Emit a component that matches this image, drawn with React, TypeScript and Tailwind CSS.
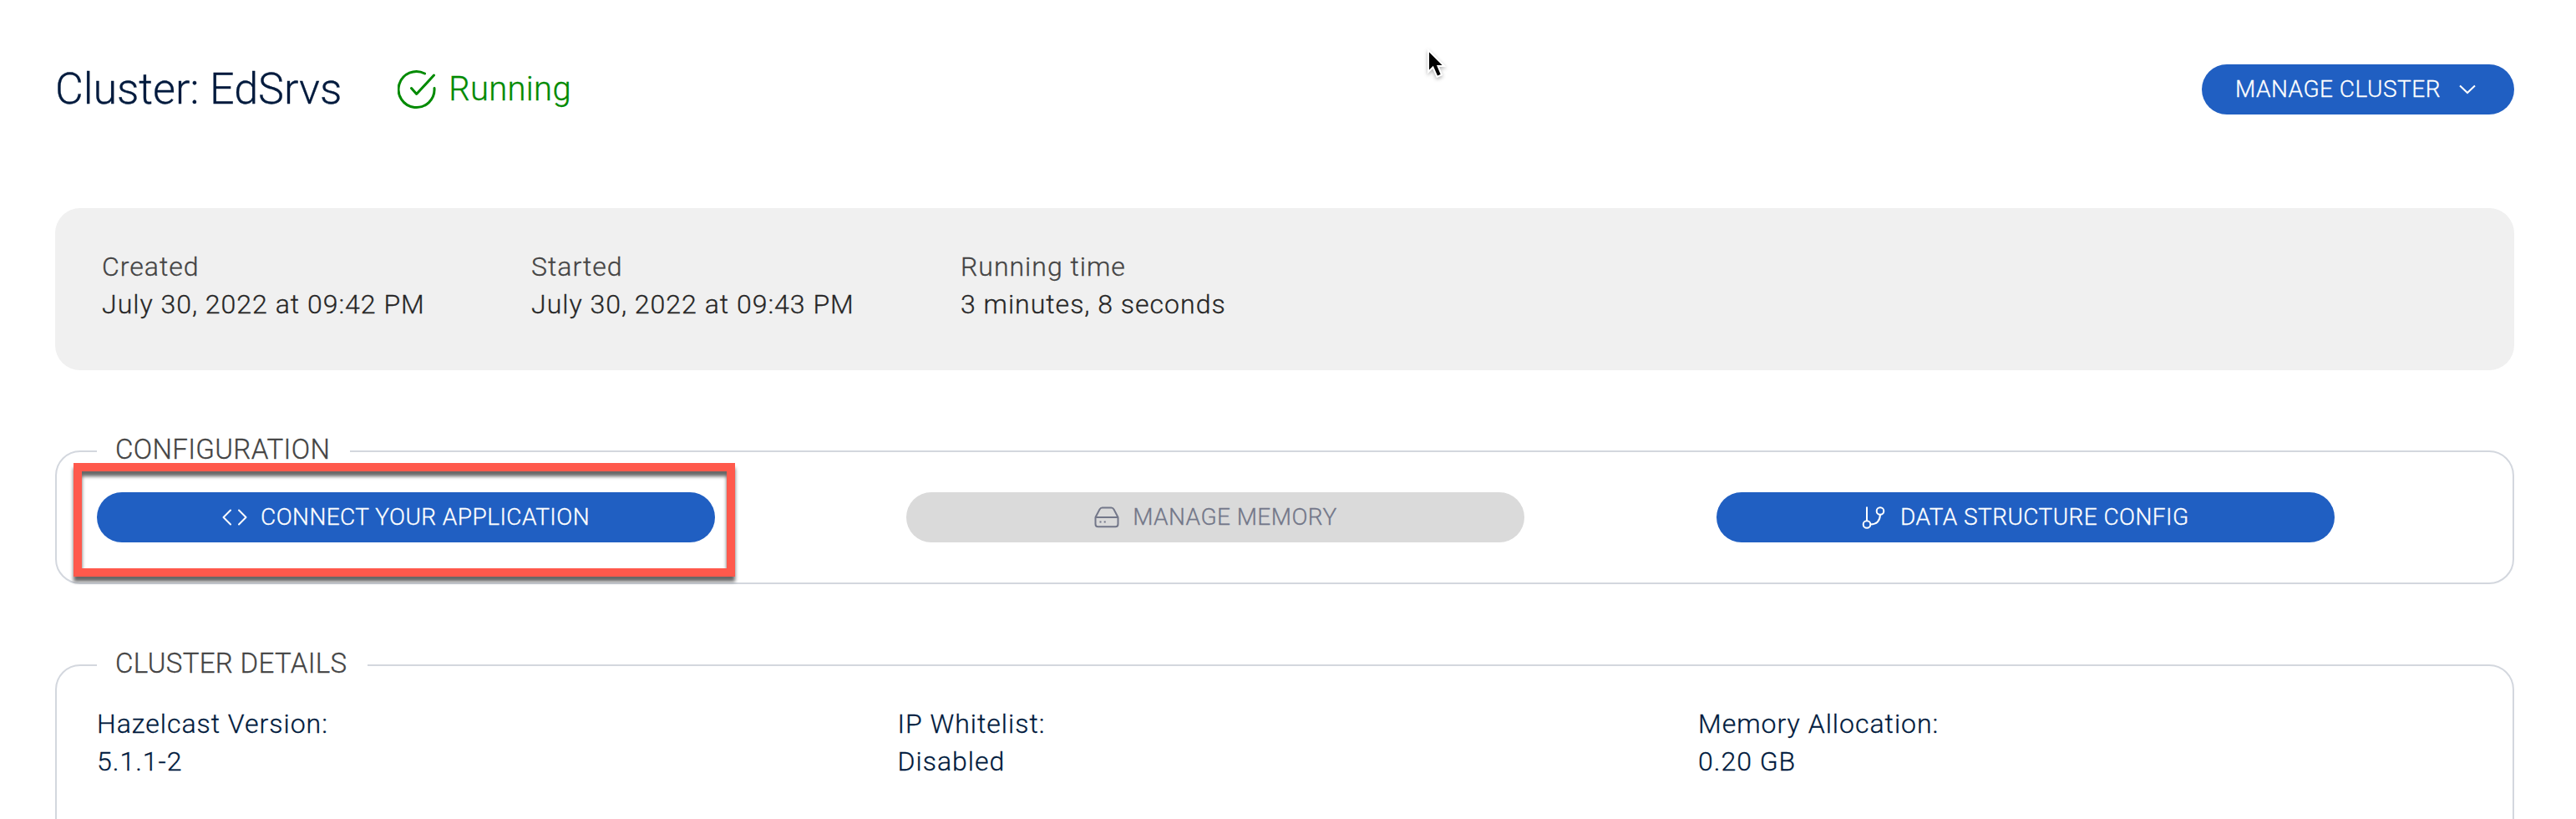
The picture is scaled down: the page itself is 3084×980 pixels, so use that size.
import React from "react";

const FONT = "font-['Roboto',sans-serif] font-light [-webkit-text-stroke:0.3px]";

type IconProps = { className?: string };

function CheckCircle({ className }: IconProps) {
  return (
    <svg className={className} viewBox="0 0 46 48" fill="none" stroke="currentColor" strokeWidth="3" strokeLinecap="round" strokeLinejoin="round">
      <path d="M32.5 5 A21.5 21.5 0 1 0 44 22.5" />
      <path d="M16.5 22.5 L22.7 29.5 L43.5 7" />
    </svg>
  );
}

function CodeIcon({ className }: IconProps) {
  return (
    <svg className={className} viewBox="0 0 30 20" fill="none" stroke="currentColor" strokeWidth="2" strokeLinecap="round" strokeLinejoin="round">
      <path d="M10 1.500 L1.500 10 L10 18.500 M20 1.500 L28.500 10 L20 18.500" />
    </svg>
  );
}

function DriveIcon({ className }: IconProps) {
  return (
    <svg className={className} viewBox="0 0 30 26" fill="none" stroke="currentColor" strokeWidth="2" strokeLinejoin="round">
      <path d="M1.500 13 L6.500 3.500 Q7.600 1.500 9.500 1.500 H20.500 Q22.400 1.500 23.500 3.500 L28.500 13 V21 Q28.500 24.300 25.500 24.300 H4.500 Q1.500 24.300 1.500 21 Z M1.500 13 H28.500" />
      <path d="M7.500 17.500 V19.500 M12.700 17.500 V19.500" />
    </svg>
  );
}

function BranchIcon({ className }: IconProps) {
  return (
    <svg className={className} viewBox="0 0 28 28" fill="none" stroke="currentColor" strokeWidth="2">
      <circle cx="6" cy="22.500" r="4.300" />
      <circle cx="22" cy="6.500" r="4.300" />
      <path d="M6 1.500 V18.200 M22 10.800 Q21.500 22.500 10.300 22.500" />
    </svg>
  );
}

function Stat({ label, value }: { label: string; value: string }) {
  return (
    <div className="w-[514px] shrink-0 text-[32px] leading-[45px] tracking-[1px]">
      <div className="text-[#444]">{label}</div>
      <div className="text-[#262626]">{value}</div>
    </div>
  );
}

function Detail({ label, value }: { label: string; value: string }) {
  return (
    <div className="w-[958.5px] shrink-0 text-[32px] leading-[45px] tracking-[1px] text-[#001a3d]">
      <div>{label}</div>
      <div>{value}</div>
    </div>
  );
}

export default function App() {
  return (
    <div className={`relative flex h-[980px] w-[3084px] flex-col overflow-hidden bg-white px-[66px] ${FONT}`}>
      <header className="mt-[76px] flex h-[62px] w-[2944px] shrink-0 items-center">
        <h1 className="text-[52px] leading-[60px] text-[#001a3d]">Cluster: EdSrvs</h1>
        <div className="ml-[67px] flex items-center text-[#008a00]">
          <CheckCircle className="h-[48px] w-[46px]" />
          <span className="ml-[15px] text-[40px] leading-[48px] tracking-[0.3px]">Running</span>
        </div>
        <button className="ml-auto flex h-[60px] w-[374px] items-center rounded-full bg-[#205fc2] pl-[40px] text-[28px] text-white">
          <span className="tracking-[0.5px]">MANAGE CLUSTER</span>
          <svg className="ml-[22px] h-[12px] w-[20px]" viewBox="0 0 20 12" fill="none" stroke="currentColor" strokeWidth="2">
            <path d="M1 1.500 L10 10 L19 1.500" />
          </svg>
        </button>
      </header>

      <section className="mt-[111px] flex h-[194px] w-[2944px] shrink-0 rounded-[30px] bg-[#f0f0f0] pl-[56px] pt-[48px]">
        <Stat label="Created" value="July 30, 2022 at 09:42 PM" />
        <Stat label="Started" value="July 30, 2022 at 09:43 PM" />
        <Stat label="Running time" value="3 minutes, 8 seconds" />
      </section>

      <fieldset className="mt-[76px] h-[180px] w-[2944px] shrink-0 rounded-[30px] border-2 border-[#d3d7de] pl-[48px]">
        <legend className="h-[42px] pl-[22px] pr-[24px] text-[33px] leading-[38px] tracking-[0.35px] text-[#444]">CONFIGURATION</legend>
        <div className="flex gap-[229.4px] pt-[28px] text-[28px] tracking-[0.45px]">
          <button className="flex h-[60px] w-[740px] items-center justify-center gap-[16px] rounded-full bg-[#205fc2] text-white">
            <CodeIcon className="h-[20px] w-[30px]" />
            <span>CONNECT YOUR APPLICATION</span>
          </button>
          <button className="flex h-[60px] w-[740px] items-center justify-center gap-[16px] rounded-full bg-[#dadada] text-[#737789]">
            <DriveIcon className="h-[26px] w-[30px]" />
            <span>MANAGE MEMORY</span>
          </button>
          <button className="flex h-[60px] w-[740px] items-center justify-center gap-[18px] rounded-full bg-[#205fc2] text-white">
            <BranchIcon className="h-[28px] w-[28px]" />
            <span>DATA STRUCTURE CONFIG</span>
          </button>
        </div>
      </fieldset>

      <fieldset className="mt-[76px] h-[260px] w-[2944px] shrink-0 rounded-[30px] border-2 border-[#d3d7de] pl-[48px]">
        <legend className="h-[42px] pl-[22px] pr-[24px] text-[33px] leading-[38px] tracking-[0.35px] text-[#444]">CLUSTER DETAILS</legend>
        <div className="flex pt-[27px]">
          <Detail label="Hazelcast Version:" value="5.1.1-2" />
          <Detail label="IP Whitelist:" value="Disabled" />
          <Detail label="Memory Allocation:" value="0.20 GB" />
        </div>
      </fieldset>

      <div className="pointer-events-none absolute left-[88px] top-[554px] h-[136px] w-[792px] border-[10px] border-[#ff594c] drop-shadow-[0_6px_2px_rgba(0,0,0,0.6)]" />

      <svg className="absolute left-[1704px] top-[54px] h-[46px] w-[32px] drop-shadow-[0_2px_2px_rgba(0,0,0,0.3)]" viewBox="0 0 32 46">
        <path d="M6 6 V32 L11.500 26.500 L16.500 38 L22 35.500 L17.500 25 H25 Z" fill="#000" stroke="#fff" strokeWidth="2" />
      </svg>
    </div>
  );
}
